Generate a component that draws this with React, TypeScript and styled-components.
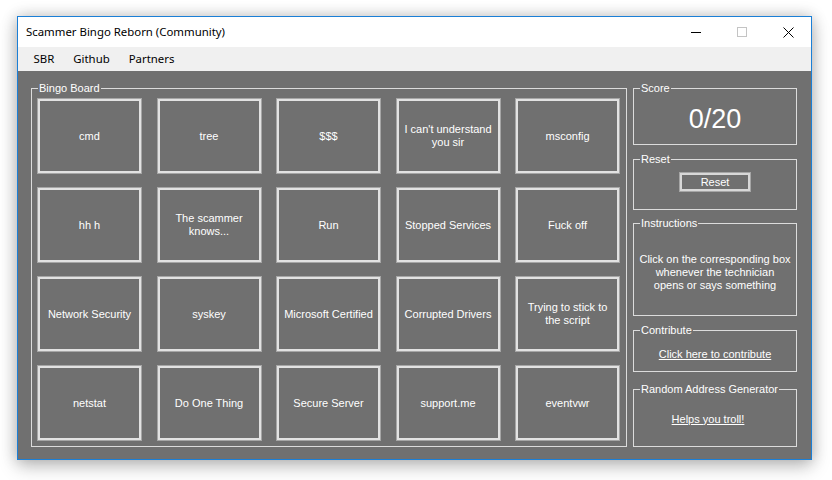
import React from "react";
import styled, { createGlobalStyle } from "styled-components";

const GlobalStyle = createGlobalStyle`
  html, body { margin: 0; padding: 0; background: #ffffff; }
  body { width: 832px; height: 480px; overflow: hidden; }
`;

const Window = styled.div`
  box-sizing: border-box;
  margin: 16px 0 0 17px;
  width: 795px;
  height: 444px;
  border: 1px solid #1b7fd6;
  display: flex;
  flex-direction: column;
  box-shadow: 0 0 14px rgba(0, 0, 0, 0.22), 0 7px 18px rgba(0, 0, 0, 0.2);
  background: #707070;
`;

const TitleBar = styled.div`
  height: 30px;
  background: #ffffff;
  display: flex;
  align-items: center;
  justify-content: space-between;
  font-family: "Segoe UI", "Noto Sans", sans-serif;
`;

const Title = styled.div`
  padding-left: 8px;
  font-size: 11.4px;
  color: #000000;
  line-height: 30px;
`;

const Controls = styled.div`
  display: flex;
  height: 100%;
`;

const ControlButton = styled.div`
  width: 46px;
  height: 30px;
  display: flex;
  align-items: center;
  justify-content: center;
`;

const MenuBar = styled.div`
  height: 24px;
  background: #f0f0f0;
  display: flex;
  align-items: center;
  padding-left: 6px;
  font-family: "Segoe UI", "Noto Sans", sans-serif;
  font-size: 11.4px;
  color: #000000;
`;

const MenuItem = styled.div`
  padding: 0 9.5px;
  line-height: 22px;
`;

const Content = styled.div`
  flex: 1;
  display: flex;
  align-items: flex-start;
  gap: 6px;
  padding: 11px 0 0 13px;
  font-family: "Liberation Sans", Arial, sans-serif;
  font-size: 11px;
  color: #ffffff;
`;

const Group = styled.fieldset<{ $w: number; $mt?: number }>`
  box-sizing: border-box;
  margin: ${(p) => p.$mt ?? 0}px 0 0 0;
  padding: 0;
  width: ${(p) => p.$w}px;
  min-width: 0;
  border: 1px solid #dcdcdc;
`;

const Legend = styled.legend`
  margin-left: 6px;
  padding: 0 1px;
  font-size: 11px;
  line-height: 13px;
  color: #ffffff;
`;

const GroupBody = styled.div<{ $h: number; $justify?: string }>`
  height: ${(p) => p.$h}px;
  display: flex;
  flex-direction: column;
  align-items: center;
  justify-content: ${(p) => p.$justify ?? "center"};
`;

const Board = styled.div`
  display: grid;
  grid-template-columns: repeat(5, 105px);
  grid-template-rows: repeat(4, 76px);
  column-gap: 14.5px;
  row-gap: 13px;
  padding: 3px 0 5px 5px;
`;

const Cell = styled.div`
  box-sizing: border-box;
  border: 1px solid #a6a6a6;
  box-shadow: inset 0 0 0 2px #e2e2e2;
  display: flex;
  align-items: center;
  justify-content: center;
  text-align: center;
  padding: 0 5px;
  line-height: 13px;
  color: #ffffff;
`;

const Side = styled.div`
  display: flex;
  flex-direction: column;
  width: 164px;
`;

const Score = styled.div`
  font-size: 27px;
  line-height: 30px;
  color: #ffffff;
  margin-top: -1px;
`;

const ResetButton = styled.div`
  box-sizing: border-box;
  width: 72px;
  height: 20px;
  margin-top: 6px;
  border: 1px solid #a6a6a6;
  box-shadow: inset 0 0 0 2px #d8d8d8;
  display: flex;
  align-items: center;
  justify-content: center;
  color: #ffffff;
`;

const InfoText = styled.div`
  text-align: center;
  line-height: 13px;
  margin-top: -1px;
`;

const LinkText = styled.a<{ $shift?: number; $up?: number }>`
  color: #ffffff;
  text-decoration: underline;
  line-height: 13px;
  margin-right: ${(p) => p.$shift ?? 0}px;
  margin-bottom: ${(p) => p.$up ?? 0}px;
  cursor: pointer;
`;

const cells = [
  "cmd",
  "tree",
  "$$$",
  "I can't understand you sir",
  "msconfig",
  "hh h",
  "The scammer knows...",
  "Run",
  "Stopped Services",
  "Fuck off",
  "Network Security",
  "syskey",
  "Microsoft Certified",
  "Corrupted Drivers",
  "Trying to stick to the script",
  "netstat",
  "Do One Thing",
  "Secure Server",
  "support.me",
  "eventvwr",
];

export default function App() {
  return (
    <>
      <GlobalStyle />
      <Window>
        <TitleBar>
          <Title>Scammer Bingo Reborn (Community)</Title>
          <Controls>
            <ControlButton>
              <svg width="10" height="10" viewBox="0 0 10 10">
                <line x1="0" y1="5.5" x2="10" y2="5.5" stroke="#000" strokeWidth="1" />
              </svg>
            </ControlButton>
            <ControlButton>
              <svg width="10" height="10" viewBox="0 0 10 10">
                <rect x="0.5" y="0.5" width="9" height="9" fill="none" stroke="#c4c4c4" strokeWidth="1" />
              </svg>
            </ControlButton>
            <ControlButton>
              <svg width="11" height="11" viewBox="0 0 11 11">
                <path d="M0.5 0.5 L10.5 10.5 M10.5 0.5 L0.5 10.5" stroke="#000" strokeWidth="1" />
              </svg>
            </ControlButton>
          </Controls>
        </TitleBar>
        <MenuBar>
          <MenuItem>SBR</MenuItem>
          <MenuItem>Github</MenuItem>
          <MenuItem>Partners</MenuItem>
        </MenuBar>
        <Content>
          <Group $w={596}>
            <Legend>Bingo Board</Legend>
            <Board>
              {cells.map((c) => (
                <Cell key={c}>{c}</Cell>
              ))}
            </Board>
          </Group>
          <Side>
            <Group $w={164}>
              <Legend>Score</Legend>
              <GroupBody $h={49}>
                <Score>0/20</Score>
              </GroupBody>
            </Group>
            <Group $w={164} $mt={8}>
              <Legend>Reset</Legend>
              <GroupBody $h={43} $justify="flex-start">
                <ResetButton>Reset</ResetButton>
              </GroupBody>
            </Group>
            <Group $w={164} $mt={7}>
              <Legend>Instructions</Legend>
              <GroupBody $h={85}>
                <InfoText>
                  Click on the corresponding box
                  <br />
                  whenever the technician
                  <br />
                  opens or says something
                </InfoText>
              </GroupBody>
            </Group>
            <Group $w={164} $mt={8}>
              <Legend>Contribute</Legend>
              <GroupBody $h={34}>
                <LinkText>Click here to contribute</LinkText>
              </GroupBody>
            </Group>
            <Group $w={164} $mt={11}>
              <Legend>Random Address Generator</Legend>
              <GroupBody $h={50}>
                <LinkText $shift={14} $up={4}>
                  Helps you troll!
                </LinkText>
              </GroupBody>
            </Group>
          </Side>
        </Content>
      </Window>
    </>
  );
}
